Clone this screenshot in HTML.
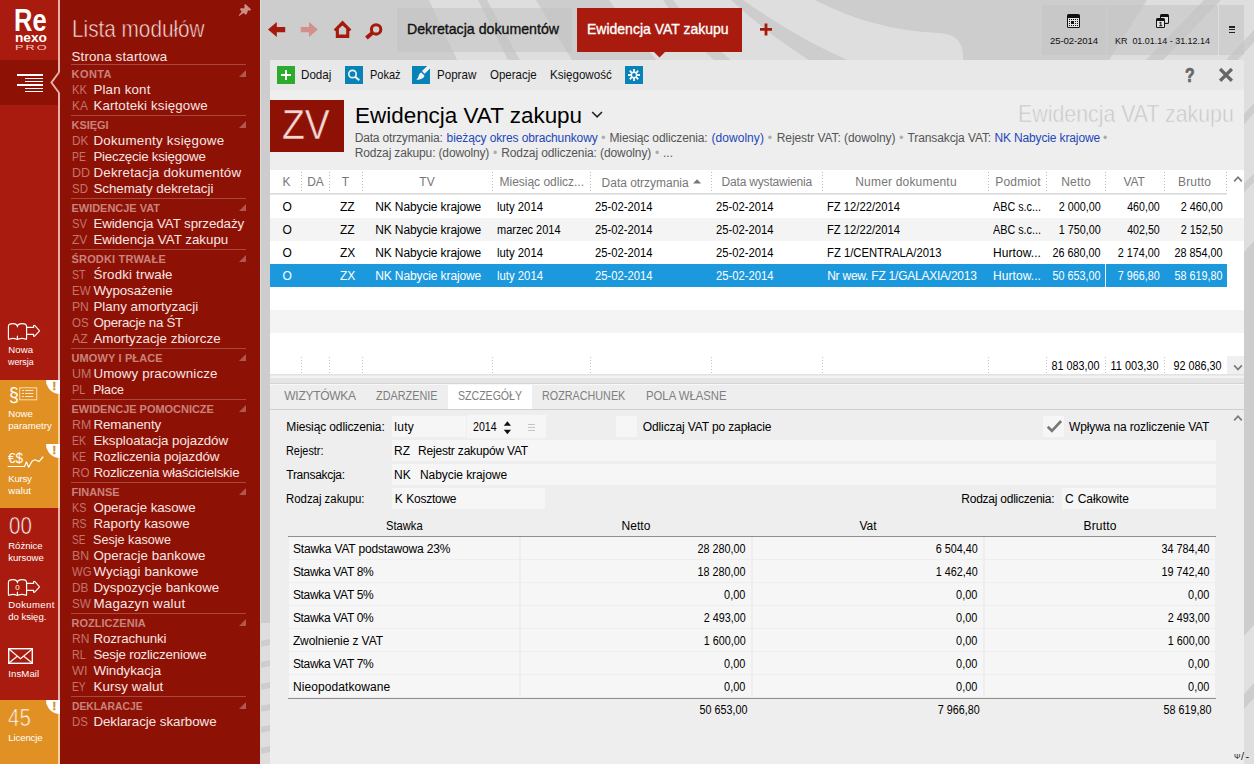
<!DOCTYPE html>
<html lang="pl"><head><meta charset="utf-8"><title>Ewidencja VAT zakupu</title>
<style>
html,body{margin:0;padding:0;background:#cdcdcd;}
body{width:1254px;height:764px;overflow:hidden;font-family:"Liberation Sans",sans-serif;}
#app{position:relative;width:1254px;height:764px;overflow:hidden;background:#cdcdcd;}
.t{position:absolute;white-space:pre;margin:0;padding:0;}
.r{position:absolute;}
svg{position:absolute;overflow:visible;}

</style></head>
<body>
<div id="app">
<svg style="left:0;top:0" width="1254" height="764" viewBox="0 0 1254 764">
<path d="M429 0H478L509 62H458Z" fill="#dedede"/>
<path d="M487 0H536L573 62H521Z" fill="#dedede"/>
<path d="M609 0H663Q683 32 716 62H658Q630 30 609 0Z" fill="#dedede"/>
<path d="M673 0H731Q765 32 812 62H733Q697 32 673 0Z" fill="#dedede"/>
<path d="M743 0H815Q872 30 938 33Q963 34 963 56V62H852Q800 40 743 0Z" fill="#dedede"/>
<path d="M1147 0H1254V103.6L1244 114V62H1108Z" fill="#dedede"/>
<path d="M1204 0H1221L1161 62H1144Z" fill="#cdcdcd"/>
<path d="M1254 30V42L1236 62H1224Z" fill="#cdcdcd"/>
<path d="M1254 113L1244 124.5V183L1254 173.8Z" fill="#dedede"/>
<path d="M1254 182L1244 192.6V252L1254 241Z" fill="#dedede"/>
<path d="M1244 636L1254 625V683L1244 694Z" fill="#e0e0e0"/>
<path d="M1244 709L1254 698V764H1244Z" fill="#dedede"/>
<rect x="260" y="623" width="10" height="141" fill="#dedede"/>
<path d="M260 641L270 639V645L260 647Z" fill="#cdcdcd"/>
<path d="M260 662L270 660V666L260 668Z" fill="#cdcdcd"/>
<path d="M260 684L270 682V688L260 690Z" fill="#cdcdcd"/>
<path d="M260 706L270 704V710L260 712Z" fill="#cdcdcd"/>
<path d="M260 727L270 725V731L260 733Z" fill="#cdcdcd"/>
<path d="M260 748L270 746V752L260 754Z" fill="#cdcdcd"/>
</svg>
<aside id="iconbar">
<div class="r" style="left:0px;top:0px;width:58px;height:764px;background:#a91b0e;"></div>
<div class="r" style="left:0px;top:60px;width:58px;height:45px;background:#8e1106;"></div>
<div class="r" style="left:58px;top:0px;width:2px;height:764px;background:#e6b0aa;"></div>
<div class="r" style="left:0px;top:380px;width:58px;height:64px;background:#e19124;"></div>
<div class="r" style="left:58px;top:380px;width:2px;height:64px;background:#f3d2a3;"></div>
<div class="r" style="left:0px;top:444px;width:58px;height:64px;background:#e19124;"></div>
<div class="r" style="left:58px;top:444px;width:2px;height:64px;background:#f3d2a3;"></div>
<div class="r" style="left:0px;top:700px;width:58px;height:64px;background:#e19124;"></div>
<div class="r" style="left:58px;top:700px;width:2px;height:64px;background:#f3d2a3;"></div>
<svg style="left:0;top:0" width="62" height="764" viewBox="0 0 62 764">
<rect x="17" y="74" width="26" height="2" fill="#fff"/>
<rect x="25" y="78" width="18" height="1" fill="#fff"/>
<rect x="25" y="81" width="18" height="1" fill="#fff"/>
<rect x="17" y="84" width="26" height="2" fill="#fff"/>
<rect x="25" y="88" width="18" height="1" fill="#fff"/>
<rect x="25" y="91" width="18" height="1" fill="#fff"/>
<rect x="57.5" y="72.6" width="3" height="19.8" fill="#8e1106"/>
<path d="M59 72.2L51.4 82.6L59 92.8" fill="none" stroke="#e6b0aa" stroke-width="1.9" stroke-linejoin="miter"/>
<path d="M8.4 338.4V326.4Q8.4 323.6 12.9 323.6Q17.4 323.6 17.4 326.8Q17.4 323.6 22 323.6Q26.6 323.6 26.6 326.4V338.4Q26.6 339.8 25.4 339.1Q22 337.5 18.6 339.1Q17.4 339.8 17.4 338.4V336M17.4 338.4Q17.4 339.8 16.2 339.1Q12.9 337.5 9.6 339.1Q8.4 339.8 8.4 338.4M26.6 327.3H33.6V325.6Q34.1 324.9 34.9 325.7L39.6 330.8L34.9 335.9Q34.1 336.7 33.6 336V334.4H26.6" fill="none" stroke="#fff" stroke-width="1.15" stroke-linejoin="round" stroke-linecap="round"/>
<path d="M8.4 594.4V582.4Q8.4 579.6 12.9 579.6Q17.4 579.6 17.4 582.8Q17.4 579.6 22 579.6Q26.6 579.6 26.6 582.4V594.4Q26.6 595.8 25.4 595.1Q22 593.5 18.6 595.1Q17.4 595.8 17.4 594.4V592M17.4 594.4Q17.4 595.8 16.2 595.1Q12.9 593.5 9.6 595.1Q8.4 595.8 8.4 594.4M26.6 583.3H33.6V581.6Q34.1 580.9 34.9 581.7L39.6 586.8L34.9 591.9Q34.1 592.7 33.6 592V590.4H26.6" fill="none" stroke="#fff" stroke-width="1.15" stroke-linejoin="round" stroke-linecap="round"/>
<rect x="19.7" y="387.8" width="17" height="12" fill="none" stroke="#f7dcb4" stroke-width="1"/>
<rect x="22" y="390.0" width="2" height="1" fill="#fbe9cf"/><rect x="25.1" y="390.0" width="8.1" height="1" fill="#fbe9cf"/>
<rect x="22" y="393.0" width="2" height="1" fill="#fbe9cf"/><rect x="25.1" y="393.0" width="8.1" height="1" fill="#fbe9cf"/>
<rect x="22" y="396.0" width="2" height="1" fill="#fbe9cf"/><rect x="25.1" y="396.0" width="8.1" height="1" fill="#fbe9cf"/>
<path d="M46 380H60V394A14 14 0 0 1 46 380Z" fill="#fff"/>
<path d="M46 444H60V458A14 14 0 0 1 46 444Z" fill="#fff"/>
<path d="M46 700H60V714A14 14 0 0 1 46 700Z" fill="#fff"/>
<path d="M8.2 466.5H24.5L26.4 461.9L28.7 467.2L31.9 461.5Q34.2 459.2 36.3 460.3T39.3 461.4L42.9 457" fill="none" stroke="#fff" stroke-width="1.2" stroke-linejoin="round" stroke-linecap="round"/>
<rect x="8.7" y="648.7" width="23.6" height="14.6" fill="none" stroke="#fff" stroke-width="1.4"/>
<path d="M9.2 649.2L20.5 658.7L31.9 649.2M9.2 662.8L17.3 656.2M31.9 662.8L23.8 656.2" fill="none" stroke="#fff" stroke-width="1.15"/>
</svg>
<div class="t" style="top:-0.48px;font-size:31.4px;line-height:41px;color:#fff;font-weight:700;left:14.30px;transform:scaleX(0.8121);transform-origin:left center;">Re</div>
<div class="t" style="top:28.93px;font-size:13.2px;line-height:17px;color:#fff;font-weight:700;left:14.60px;transform:scaleX(1.0396);transform-origin:left center;">nexo</div>
<div class="t" style="top:43.33px;font-size:7.7px;line-height:10px;color:#f3cdc9;left:14.60px;letter-spacing:1.2px;transform:scaleX(1.66);transform-origin:left center;">PRO</div>
<div class="t" style="top:343.67px;font-size:9.6px;line-height:12px;color:#fff;letter-spacing:0.142px;left:8.20px;">Nowa</div>
<div class="t" style="top:355.67px;font-size:9.6px;line-height:12px;color:#fff;left:8.20px;transform:scaleX(0.9230);transform-origin:left center;">wersja</div>
<div class="t" style="top:407.67px;font-size:9.6px;line-height:12px;color:#fff;letter-spacing:0.067px;left:8.20px;">Nowe</div>
<div class="t" style="top:419.67px;font-size:9.6px;line-height:12px;color:#fff;letter-spacing:0.068px;left:8.20px;">parametry</div>
<div class="t" style="top:472.67px;font-size:9.6px;line-height:12px;color:#fff;letter-spacing:-0.206px;left:8.20px;">Kursy</div>
<div class="t" style="top:484.67px;font-size:9.6px;line-height:12px;color:#fff;letter-spacing:0.099px;left:8.20px;">walut</div>
<div class="t" style="top:540.37px;font-size:9.6px;line-height:12px;color:#fff;letter-spacing:-0.025px;left:8.20px;">Różnice</div>
<div class="t" style="top:552.37px;font-size:9.6px;line-height:12px;color:#fff;letter-spacing:-0.019px;left:8.20px;">kursowe</div>
<div class="t" style="top:599.37px;font-size:9.6px;line-height:12px;color:#fff;letter-spacing:0.358px;left:8.20px;">Dokument</div>
<div class="t" style="top:611.37px;font-size:9.6px;line-height:12px;color:#fff;letter-spacing:-0.023px;left:8.20px;">do księg.</div>
<div class="t" style="top:668.27px;font-size:9.6px;line-height:12px;color:#fff;letter-spacing:0.101px;left:8.20px;">InsMail</div>
<div class="t" style="top:732.17px;font-size:9.6px;line-height:12px;color:#fff;letter-spacing:-0.100px;left:8.20px;">Licencje</div>
<div class="t" style="top:510.24px;font-size:24.7px;line-height:32px;color:#fff;left:9.00px;transform:scaleX(0.8300);transform-origin:left center;-webkit-text-stroke:.7px #a91b0e;">00</div>
<div class="t" style="top:702.24px;font-size:24.7px;line-height:32px;color:#fff;left:8.40px;transform:scaleX(0.8300);transform-origin:left center;-webkit-text-stroke:.7px #e19124;">45</div>
<div class="t" style="top:379.39px;font-size:11px;line-height:14px;color:#de8a1c;font-weight:700;left:52.50px;-webkit-text-stroke:.5px #de8a1c;">!</div>
<div class="t" style="top:443.39px;font-size:11px;line-height:14px;color:#de8a1c;font-weight:700;left:52.50px;-webkit-text-stroke:.5px #de8a1c;">!</div>
<div class="t" style="top:699.39px;font-size:11px;line-height:14px;color:#de8a1c;font-weight:700;left:52.50px;-webkit-text-stroke:.5px #de8a1c;">!</div>
<div class="t" style="top:582.83px;font-size:8px;line-height:10px;color:#fff;left:15.20px;">0</div>
<div class="t" style="top:382.58px;font-size:19.4px;line-height:25px;color:#fff;left:8.60px;transform:scaleX(0.9077);transform-origin:left center;">§</div>
<div class="t" style="top:447.80px;font-size:15px;line-height:20px;color:#fff;left:8.20px;transform:scaleX(0.9049);transform-origin:left center;">€$</div>
</aside>
<nav id="modules">
<div class="r" style="left:60px;top:0px;width:200px;height:764px;background:#8e1106;"></div>
<div class="t" style="top:13.38px;font-size:24px;line-height:31px;color:#f8e4e1;left:71.70px;transform:scaleX(0.8643);transform-origin:left center;-webkit-text-stroke:.6px #8e1106;">Lista modułów</div>
<div class="t" style="top:47.88px;font-size:13.33px;line-height:17px;color:#f7e6e3;letter-spacing:0.164px;left:71.50px;">Strona startowa</div>
<div class="r" style="left:71px;top:64px;width:175px;height:1px;background:#a9483f;"></div>
<div class="t" style="top:66.89px;font-size:11px;line-height:14px;color:#c9837b;font-weight:700;letter-spacing:0.441px;left:71.50px;">KONTA</div>
<svg style="left:239px;top:70px" width="7" height="7"><path d="M7 0V7H0Z" fill="#b0574e"/></svg>
<div class="t" style="top:81.08px;font-size:13.33px;line-height:17px;color:#c4746b;left:71.50px;transform:scaleX(0.8443);transform-origin:left center;">KK</div>
<div class="t" style="top:81.08px;font-size:13.33px;line-height:17px;color:#f7e6e3;letter-spacing:0.180px;left:93.40px;">Plan kont</div>
<div class="t" style="top:97.08px;font-size:13.33px;line-height:17px;color:#c4746b;left:71.50px;transform:scaleX(0.8912);transform-origin:left center;">KA</div>
<div class="t" style="top:97.08px;font-size:13.33px;line-height:17px;color:#f7e6e3;letter-spacing:0.135px;left:93.40px;">Kartoteki księgowe</div>
<div class="r" style="left:71px;top:115px;width:175px;height:1px;background:#a9483f;"></div>
<div class="t" style="top:117.89px;font-size:11px;line-height:14px;color:#c9837b;font-weight:700;letter-spacing:-0.033px;left:71.50px;">KSIĘGI</div>
<svg style="left:239px;top:121px" width="7" height="7"><path d="M7 0V7H0Z" fill="#b0574e"/></svg>
<div class="t" style="top:132.08px;font-size:13.33px;line-height:17px;color:#c4746b;left:71.50px;transform:scaleX(0.8954);transform-origin:left center;">DK</div>
<div class="t" style="top:132.08px;font-size:13.33px;line-height:17px;color:#f7e6e3;letter-spacing:0.234px;left:93.40px;">Dokumenty księgowe</div>
<div class="t" style="top:148.08px;font-size:13.33px;line-height:17px;color:#c4746b;left:71.50px;transform:scaleX(0.7751);transform-origin:left center;">PE</div>
<div class="t" style="top:148.08px;font-size:13.33px;line-height:17px;color:#f7e6e3;letter-spacing:-0.228px;left:93.40px;">Pieczęcie księgowe</div>
<div class="t" style="top:164.08px;font-size:13.33px;line-height:17px;color:#c4746b;left:71.50px;transform:scaleX(0.9418);transform-origin:left center;">DD</div>
<div class="t" style="top:164.08px;font-size:13.33px;line-height:17px;color:#f7e6e3;letter-spacing:0.239px;left:93.40px;">Dekretacja dokumentów</div>
<div class="t" style="top:180.08px;font-size:13.33px;line-height:17px;color:#c4746b;left:71.50px;transform:scaleX(0.8606);transform-origin:left center;">SD</div>
<div class="t" style="top:180.08px;font-size:13.33px;line-height:17px;color:#f7e6e3;left:93.40px;">Schematy dekretacji</div>
<div class="r" style="left:71px;top:198px;width:175px;height:1px;background:#a9483f;"></div>
<div class="t" style="top:200.89px;font-size:11px;line-height:14px;color:#c9837b;font-weight:700;letter-spacing:-0.025px;left:71.50px;">EWIDENCJE VAT</div>
<svg style="left:239px;top:204px" width="7" height="7"><path d="M7 0V7H0Z" fill="#b0574e"/></svg>
<div class="t" style="top:215.08px;font-size:13.33px;line-height:17px;color:#c4746b;left:71.50px;transform:scaleX(0.8387);transform-origin:left center;">SV</div>
<div class="t" style="top:215.08px;font-size:13.33px;line-height:17px;color:#f7e6e3;letter-spacing:-0.083px;left:93.40px;">Ewidencja VAT sprzedaży</div>
<div class="t" style="top:231.08px;font-size:13.33px;line-height:17px;color:#c4746b;left:71.50px;transform:scaleX(0.9053);transform-origin:left center;">ZV</div>
<div class="t" style="top:231.08px;font-size:13.33px;line-height:17px;color:#f7e6e3;left:93.40px;">Ewidencja VAT zakupu</div>
<div class="r" style="left:71px;top:249px;width:175px;height:1px;background:#a9483f;"></div>
<div class="t" style="top:251.89px;font-size:11px;line-height:14px;color:#c9837b;font-weight:700;letter-spacing:0.179px;left:71.50px;">ŚRODKI TRWAŁE</div>
<svg style="left:239px;top:255px" width="7" height="7"><path d="M7 0V7H0Z" fill="#b0574e"/></svg>
<div class="t" style="top:266.08px;font-size:13.33px;line-height:17px;color:#c4746b;left:71.50px;transform:scaleX(0.8007);transform-origin:left center;">ST</div>
<div class="t" style="top:266.08px;font-size:13.33px;line-height:17px;color:#f7e6e3;letter-spacing:0.166px;left:93.40px;">Środki trwałe</div>
<div class="t" style="top:282.08px;font-size:13.33px;line-height:17px;color:#c4746b;left:71.50px;transform:scaleX(0.8672);transform-origin:left center;">EW</div>
<div class="t" style="top:282.08px;font-size:13.33px;line-height:17px;color:#f7e6e3;letter-spacing:-0.064px;left:93.40px;">Wyposażenie</div>
<div class="t" style="top:298.08px;font-size:13.33px;line-height:17px;color:#c4746b;left:71.50px;transform:scaleX(0.9135);transform-origin:left center;">PN</div>
<div class="t" style="top:298.08px;font-size:13.33px;line-height:17px;color:#f7e6e3;letter-spacing:0.026px;left:93.40px;">Plany amortyzacji</div>
<div class="t" style="top:314.08px;font-size:13.33px;line-height:17px;color:#c4746b;left:71.50px;transform:scaleX(0.8622);transform-origin:left center;">OS</div>
<div class="t" style="top:314.08px;font-size:13.33px;line-height:17px;color:#f7e6e3;letter-spacing:-0.267px;left:93.40px;">Operacje na ŚT</div>
<div class="t" style="top:330.08px;font-size:13.33px;line-height:17px;color:#c4746b;left:71.50px;transform:scaleX(0.9223);transform-origin:left center;">AZ</div>
<div class="t" style="top:330.08px;font-size:13.33px;line-height:17px;color:#f7e6e3;letter-spacing:0.026px;left:93.40px;">Amortyzacje zbiorcze</div>
<div class="r" style="left:71px;top:348px;width:175px;height:1px;background:#a9483f;"></div>
<div class="t" style="top:350.89px;font-size:11px;line-height:14px;color:#c9837b;font-weight:700;letter-spacing:0.128px;left:71.50px;">UMOWY I PŁACE</div>
<svg style="left:239px;top:354px" width="7" height="7"><path d="M7 0V7H0Z" fill="#b0574e"/></svg>
<div class="t" style="top:365.08px;font-size:13.33px;line-height:17px;color:#c4746b;left:71.50px;transform:scaleX(0.9356);transform-origin:left center;">UM</div>
<div class="t" style="top:365.08px;font-size:13.33px;line-height:17px;color:#f7e6e3;letter-spacing:0.111px;left:93.40px;">Umowy pracownicze</div>
<div class="t" style="top:381.08px;font-size:13.33px;line-height:17px;color:#c4746b;left:71.50px;transform:scaleX(0.8170);transform-origin:left center;">PL</div>
<div class="t" style="top:381.08px;font-size:13.33px;line-height:17px;color:#f7e6e3;left:93.40px;transform:scaleX(0.9297);transform-origin:left center;">Płace</div>
<div class="r" style="left:71px;top:399px;width:175px;height:1px;background:#a9483f;"></div>
<div class="t" style="top:401.89px;font-size:11px;line-height:14px;color:#c9837b;font-weight:700;letter-spacing:-0.036px;left:71.50px;">EWIDENCJE POMOCNICZE</div>
<svg style="left:239px;top:405px" width="7" height="7"><path d="M7 0V7H0Z" fill="#b0574e"/></svg>
<div class="t" style="top:416.08px;font-size:13.33px;line-height:17px;color:#c4746b;left:71.50px;transform:scaleX(0.9333);transform-origin:left center;">RM</div>
<div class="t" style="top:416.08px;font-size:13.33px;line-height:17px;color:#f7e6e3;letter-spacing:-0.041px;left:93.40px;">Remanenty</div>
<div class="t" style="top:432.08px;font-size:13.33px;line-height:17px;color:#c4746b;left:71.50px;transform:scaleX(0.7900);transform-origin:left center;">EK</div>
<div class="t" style="top:432.08px;font-size:13.33px;line-height:17px;color:#f7e6e3;letter-spacing:-0.043px;left:93.40px;">Eksploatacja pojazdów</div>
<div class="t" style="top:448.08px;font-size:13.33px;line-height:17px;color:#c4746b;left:71.50px;transform:scaleX(0.7900);transform-origin:left center;">KE</div>
<div class="t" style="top:448.08px;font-size:13.33px;line-height:17px;color:#f7e6e3;letter-spacing:-0.114px;left:93.40px;">Rozliczenia pojazdów</div>
<div class="t" style="top:464.08px;font-size:13.33px;line-height:17px;color:#c4746b;left:71.50px;transform:scaleX(0.8744);transform-origin:left center;">RO</div>
<div class="t" style="top:464.08px;font-size:13.33px;line-height:17px;color:#f7e6e3;letter-spacing:-0.221px;left:93.40px;">Rozliczenia właścicielskie</div>
<div class="r" style="left:71px;top:482px;width:175px;height:1px;background:#a9483f;"></div>
<div class="t" style="top:484.89px;font-size:11px;line-height:14px;color:#c9837b;font-weight:700;letter-spacing:-0.012px;left:71.50px;">FINANSE</div>
<svg style="left:239px;top:488px" width="7" height="7"><path d="M7 0V7H0Z" fill="#b0574e"/></svg>
<div class="t" style="top:499.08px;font-size:13.33px;line-height:17px;color:#c4746b;left:71.50px;transform:scaleX(0.8081);transform-origin:left center;">KS</div>
<div class="t" style="top:499.08px;font-size:13.33px;line-height:17px;color:#f7e6e3;letter-spacing:-0.059px;left:93.40px;">Operacje kasowe</div>
<div class="t" style="top:515.08px;font-size:13.33px;line-height:17px;color:#c4746b;left:71.50px;transform:scaleX(0.7887);transform-origin:left center;">RS</div>
<div class="t" style="top:515.08px;font-size:13.33px;line-height:17px;color:#f7e6e3;letter-spacing:0.046px;left:93.40px;">Raporty kasowe</div>
<div class="t" style="top:531.08px;font-size:13.33px;line-height:17px;color:#c4746b;left:71.50px;transform:scaleX(0.7538);transform-origin:left center;">SE</div>
<div class="t" style="top:531.08px;font-size:13.33px;line-height:17px;color:#f7e6e3;left:93.40px;transform:scaleX(0.9473);transform-origin:left center;">Sesje kasowe</div>
<div class="t" style="top:547.08px;font-size:13.33px;line-height:17px;color:#c4746b;left:71.50px;transform:scaleX(0.9227);transform-origin:left center;">BN</div>
<div class="t" style="top:547.08px;font-size:13.33px;line-height:17px;color:#f7e6e3;letter-spacing:0.066px;left:93.40px;">Operacje bankowe</div>
<div class="t" style="top:563.08px;font-size:13.33px;line-height:17px;color:#c4746b;left:71.50px;transform:scaleX(0.8452);transform-origin:left center;">WG</div>
<div class="t" style="top:563.08px;font-size:13.33px;line-height:17px;color:#f7e6e3;letter-spacing:0.107px;left:93.40px;">Wyciągi bankowe</div>
<div class="t" style="top:579.08px;font-size:13.33px;line-height:17px;color:#c4746b;left:71.50px;transform:scaleX(0.8903);transform-origin:left center;">DB</div>
<div class="t" style="top:579.08px;font-size:13.33px;line-height:17px;color:#f7e6e3;letter-spacing:0.039px;left:93.40px;">Dyspozycje bankowe</div>
<div class="t" style="top:595.08px;font-size:13.33px;line-height:17px;color:#c4746b;left:71.50px;transform:scaleX(0.8822);transform-origin:left center;">SW</div>
<div class="t" style="top:595.08px;font-size:13.33px;line-height:17px;color:#f7e6e3;letter-spacing:0.238px;left:93.40px;">Magazyn walut</div>
<div class="r" style="left:71px;top:613px;width:175px;height:1px;background:#a9483f;"></div>
<div class="t" style="top:615.89px;font-size:11px;line-height:14px;color:#c9837b;font-weight:700;letter-spacing:0.022px;left:71.50px;">ROZLICZENIA</div>
<svg style="left:239px;top:619px" width="7" height="7"><path d="M7 0V7H0Z" fill="#b0574e"/></svg>
<div class="t" style="top:630.08px;font-size:13.33px;line-height:17px;color:#c4746b;left:71.50px;transform:scaleX(0.9038);transform-origin:left center;">RN</div>
<div class="t" style="top:630.08px;font-size:13.33px;line-height:17px;color:#f7e6e3;letter-spacing:-0.090px;left:93.40px;">Rozrachunki</div>
<div class="t" style="top:646.08px;font-size:13.33px;line-height:17px;color:#c4746b;left:71.50px;transform:scaleX(0.8111);transform-origin:left center;">RL</div>
<div class="t" style="top:646.08px;font-size:13.33px;line-height:17px;color:#f7e6e3;letter-spacing:-0.208px;left:93.40px;">Sesje rozliczeniowe</div>
<div class="t" style="top:662.08px;font-size:13.33px;line-height:17px;color:#c4746b;left:71.50px;transform:scaleX(0.9530);transform-origin:left center;">WI</div>
<div class="t" style="top:662.08px;font-size:13.33px;line-height:17px;color:#f7e6e3;letter-spacing:-0.036px;left:93.40px;">Windykacja</div>
<div class="t" style="top:678.08px;font-size:13.33px;line-height:17px;color:#c4746b;left:71.50px;transform:scaleX(0.7698);transform-origin:left center;">EY</div>
<div class="t" style="top:678.08px;font-size:13.33px;line-height:17px;color:#f7e6e3;letter-spacing:0.101px;left:93.40px;">Kursy walut</div>
<div class="r" style="left:71px;top:696px;width:175px;height:1px;background:#a9483f;"></div>
<div class="t" style="top:698.89px;font-size:11px;line-height:14px;color:#c9837b;font-weight:700;left:71.50px;transform:scaleX(0.9390);transform-origin:left center;">DEKLARACJE</div>
<svg style="left:239px;top:702px" width="7" height="7"><path d="M7 0V7H0Z" fill="#b0574e"/></svg>
<div class="t" style="top:713.08px;font-size:13.33px;line-height:17px;color:#c4746b;left:71.50px;transform:scaleX(0.8606);transform-origin:left center;">DS</div>
<div class="t" style="top:713.08px;font-size:13.33px;line-height:17px;color:#f7e6e3;letter-spacing:-0.027px;left:93.40px;">Deklaracje skarbowe</div>
<svg style="left:0;top:0" width="262" height="20" viewBox="0 0 262 20"><path d="M245.4 4L251.2 9.4L249.7 10.7L248 10.2L247 13.4L245.7 14.8L243.5 13.1L239.2 16L238.7 15.3L241.7 11.8L240 9.4L241 8.1L243.8 8.5L244.8 6.4L244.1 5.3Z" fill="#cf8d86"/></svg>
<div class="r" style="left:260px;top:0px;width:1px;height:764px;background:#d9dddd;"></div>
</nav>
<header id="topbar">
<svg style="left:0;top:0" width="1254" height="60" viewBox="0 0 1254 60">
<path d="M268 29.5L276.8 22V27H285.2V32.2H276.8V37Z" fill="#a61a0e"/>
<path d="M317.8 29.5L309 22V27H300.8V32.2H309V37Z" fill="#d3908a"/>
<path d="M342.5 20.6L351.4 29.6L349.6 31.2L349.3 30.9V38H335.8V30.9L335.4 31.2L333.7 29.6ZM342.5 25.4L338.9 28.8V34.6H346.2V28.8Z" fill="#a61a0e" fill-rule="evenodd"/>
<circle cx="376.1" cy="29.4" r="4.7" fill="none" stroke="#a61a0e" stroke-width="3.1"/>
<path d="M372.8 32.6L366.4 38.1" stroke="#a61a0e" stroke-width="4" fill="none"/>
<path d="M760 28H764.6V23.4H767.4V28H772V30.8H767.4V35.4H764.6V30.8H760Z" fill="#a61a0e"/>
</svg>
<div class="r" style="left:397px;top:8px;width:175px;height:44px;background:rgba(194,194,194,0.55);"></div>
<div class="r" style="left:577px;top:8px;width:165px;height:44px;background:#a91b0e;"></div>
<svg style="left:654px;top:52px" width="12" height="6"><path d="M0 0H11L5.5 5.5Z" fill="#a91b0e"/></svg>
<div class="t" style="top:19.10px;font-size:15px;line-height:20px;color:#111;left:407.00px;transform:scaleX(0.9446);transform-origin:left center;-webkit-text-stroke:.35px #111;">Dekretacja dokumentów</div>
<div class="t" style="top:19.10px;font-size:15px;line-height:20px;color:#fff;left:587.00px;transform:scaleX(0.9330);transform-origin:left center;-webkit-text-stroke:.35px #fff;">Ewidencja VAT zakupu</div>
<div class="r" style="left:1042px;top:5px;width:64px;height:50px;background:rgba(196,196,196,0.6);"></div>
<div class="r" style="left:1107px;top:5px;width:111px;height:50px;background:rgba(196,196,196,0.6);"></div>
<div class="r" style="left:1219px;top:5px;width:25px;height:50px;background:rgba(196,196,196,0.6);"></div>
<div class="t" style="top:34.57px;font-size:9.6px;line-height:12px;color:#111;letter-spacing:-0.108px;left:1050.00px;">25-02-2014</div>
<div class="t" style="top:34.57px;font-size:9.6px;line-height:12px;color:#111;left:1115.00px;transform:scaleX(0.9325);transform-origin:left center;">KR  01.01.14 - 31.12.14</div>
<svg style="left:1060px;top:10px" width="110" height="24" viewBox="1060 10 110 24">
<rect x="1067" y="14" width="13" height="14" rx="1.6" fill="#111"/>
<rect x="1068" y="18" width="11" height="9" fill="#e4e4e4"/>
<g fill="#111"><rect x="1069" y="19" width="1" height="1"/><rect x="1071" y="19" width="1" height="1"/><rect x="1073" y="19" width="1" height="1"/><rect x="1075" y="19" width="1" height="1"/><rect x="1077" y="19" width="1" height="1"/><rect x="1069" y="21" width="1" height="1"/><rect x="1075" y="21" width="1" height="1"/><rect x="1077" y="21" width="1" height="1"/><rect x="1069" y="23" width="1" height="1"/><rect x="1075" y="23" width="1" height="1"/><rect x="1077" y="23" width="1" height="1"/><rect x="1069" y="25" width="1" height="1"/><rect x="1071" y="25" width="1" height="1"/><rect x="1073" y="25" width="1" height="1"/><rect x="1075" y="25" width="1" height="1"/><rect x="1077" y="25" width="1" height="1"/><rect x="1071" y="21" width="3" height="3"/></g>
<rect x="1160" y="14" width="9" height="10" rx="1.5" fill="#111"/><rect x="1161" y="17" width="7" height="5.8" fill="#e2e2e2"/>
<rect x="1156" y="18" width="9" height="10" rx="1.5" fill="#111"/><rect x="1157" y="21" width="7" height="6" fill="#e6e6e6"/>
</svg>
<div class="t" style="top:20.76px;font-size:5.6px;line-height:7px;color:#111;font-weight:700;left:1158.90px;-webkit-text-stroke:.3px #111;">1</div>
<div class="r" style="left:1228.6px;top:26.3px;width:6.4px;height:1.3px;background:#222;"></div>
<div class="r" style="left:1228.6px;top:29px;width:6.4px;height:1.3px;background:#222;"></div>
<div class="r" style="left:1228.6px;top:31.7px;width:6.4px;height:1.3px;background:#222;"></div>
</header>
<main id="content">
<div class="r" style="left:270px;top:60px;width:974px;height:704px;background:#eeeeee;"></div>
<div class="r" style="left:270px;top:60px;width:974px;height:30px;background:#e8e8e8;"></div>
<div class="r" style="left:277px;top:66px;width:18px;height:18px;background:#2dab2d;"></div>
<div class="r" style="left:345px;top:66px;width:18px;height:18px;background:#0783b8;"></div>
<div class="r" style="left:412px;top:66px;width:18px;height:18px;background:#0783b8;"></div>
<div class="r" style="left:625px;top:66px;width:18px;height:18px;background:#0783b8;"></div>
<svg style="left:270px;top:60px" width="974" height="30" viewBox="270 60 974 30">
<path d="M281 73.9H285V70H287V73.9H291V76H287V80H285V76H281Z" fill="#fff"/>
<circle cx="352.5" cy="74" r="3.7" fill="none" stroke="#f0f0f0" stroke-width="1.7"/><path d="M355.3 76.9L359.3 80.3" stroke="#f0f0f0" stroke-width="2.1" fill="none"/>
<path d="M427.2 66H430V68.6L424.6 73.8L422 71Z" fill="#f2f2f2"/>
<path d="M421.6 72.8L424.4 75.6Q424.2 78.4 420.4 79.2Q418.2 79.7 416.4 79.7Q418.4 77.8 418.7 75.8Q419.2 72.8 422 72.4Z" fill="#f2f2f2"/>
<g stroke="#f4f4f4" fill="none"><circle cx="634" cy="75" r="2.7" stroke-width="1.5"/><path d="M637.00 75.00L640.00 75.00M636.12 77.12L638.24 79.24M634.00 78.00L634.00 81.00M631.88 77.12L629.76 79.24M631.00 75.00L628.00 75.00M631.88 72.88L629.76 70.76M634.00 72.00L634.00 69.00M636.12 72.88L638.24 70.76" stroke-width="1.9"/></g>
<path d="M1219.2 70.2L1221.3 68.1L1226 72.8L1230.7 68.1L1232.8 70.2L1228.1 74.9L1232.8 79.6L1230.7 81.7L1226 77L1221.3 81.7L1219.2 79.6L1223.9 74.9Z" fill="#666" stroke="#666" stroke-width=".5"/>
</svg>
<div class="t" style="top:66.10px;font-size:13px;line-height:17px;color:#111;left:301.40px;transform:scaleX(0.8949);transform-origin:left center;">Dodaj</div>
<div class="t" style="top:66.10px;font-size:13px;line-height:17px;color:#111;left:369.50px;transform:scaleX(0.8439);transform-origin:left center;">Pokaż</div>
<div class="t" style="top:66.10px;font-size:13px;line-height:17px;color:#111;left:436.70px;transform:scaleX(0.8916);transform-origin:left center;">Popraw</div>
<div class="t" style="top:66.10px;font-size:13px;line-height:17px;color:#111;left:489.60px;transform:scaleX(0.8834);transform-origin:left center;">Operacje</div>
<div class="t" style="top:66.10px;font-size:13px;line-height:17px;color:#111;left:550.30px;transform:scaleX(0.8894);transform-origin:left center;">Księgowość</div>
<div class="t" style="top:61.97px;font-size:20px;line-height:26px;color:#666;font-weight:700;left:1185.30px;transform:scaleX(0.7857);transform-origin:left center;-webkit-text-stroke:.7px #666;">?</div>
<div class="r" style="left:270px;top:100px;width:74px;height:52px;background:#8e1106;"></div>
<div class="t" style="top:96.64px;font-size:42.3px;line-height:55px;color:#f4d6d2;left:281.50px;transform:scaleX(0.8842);transform-origin:left center;-webkit-text-stroke:.45px #8e1106;">ZV</div>
<div class="t" style="top:99.90px;font-size:22.8px;line-height:30px;color:#000;left:355.20px;transform:scaleX(0.9846);transform-origin:left center;">Ewidencja VAT zakupu</div>
<svg style="left:591px;top:110px" width="12" height="9"><path d="M1.2 2L6.1 6.8L11 2" fill="none" stroke="#222" stroke-width="1.6"/></svg>
<div class="t" style="top:97.98px;font-size:24.3px;line-height:32px;color:#c6c6c6;right:20.30px;transform:scaleX(0.8775);transform-origin:right center;-webkit-text-stroke:.6px #eeeeee;">Ewidencja VAT zakupu</div>
<div class="t" style="top:129.74px;font-size:12px;line-height:16px;color:#555;letter-spacing:-0.169px;left:354.70px;">Data otrzymania:</div>
<div class="t" style="top:129.74px;font-size:12px;line-height:16px;color:#2446b8;letter-spacing:-0.118px;left:446.60px;">bieżący okres obrachunkowy</div>
<div class="t" style="top:129.74px;font-size:12px;line-height:16px;color:#aaa;left:601.30px;">•</div>
<div class="t" style="top:129.74px;font-size:12px;line-height:16px;color:#555;letter-spacing:-0.143px;left:609.50px;">Miesiąc odliczenia:</div>
<div class="t" style="top:129.74px;font-size:12px;line-height:16px;color:#2446b8;letter-spacing:0.063px;left:711.40px;">(dowolny)</div>
<div class="t" style="top:129.74px;font-size:12px;line-height:16px;color:#aaa;left:767.80px;">•</div>
<div class="t" style="top:129.74px;font-size:12px;line-height:16px;color:#555;letter-spacing:-0.067px;left:776.70px;">Rejestr VAT: (dowolny)</div>
<div class="t" style="top:129.74px;font-size:12px;line-height:16px;color:#aaa;left:899.30px;">•</div>
<div class="t" style="top:129.74px;font-size:12px;line-height:16px;color:#555;letter-spacing:-0.109px;left:907.50px;">Transakcja VAT:</div>
<div class="t" style="top:129.74px;font-size:12px;line-height:16px;color:#2446b8;letter-spacing:-0.136px;left:994.40px;">NK Nabycie krajowe</div>
<div class="t" style="top:129.74px;font-size:12px;line-height:16px;color:#aaa;left:1103.00px;">•</div>
<div class="t" style="top:144.54px;font-size:12px;line-height:16px;color:#555;letter-spacing:-0.149px;left:354.70px;">Rodzaj zakupu: (dowolny)</div>
<div class="t" style="top:144.54px;font-size:12px;line-height:16px;color:#aaa;left:493.00px;">•</div>
<div class="t" style="top:144.54px;font-size:12px;line-height:16px;color:#555;letter-spacing:-0.098px;left:501.20px;">Rodzaj odliczenia: (dowolny)</div>
<div class="t" style="top:144.54px;font-size:12px;line-height:16px;color:#aaa;left:655.00px;">•</div>
<div class="t" style="top:144.54px;font-size:12px;line-height:16px;color:#555;left:663.00px;">...</div>
<div class="r" style="left:270px;top:170px;width:974px;height:205px;background:#fff;"></div>
<div class="r" style="left:270px;top:218px;width:974px;height:23px;background:#f4f4f4;"></div>
<div class="r" style="left:270px;top:310px;width:974px;height:23px;background:#f4f4f4;"></div>
<div class="r" style="left:270px;top:264px;width:957px;height:23px;background:#1c99dd;"></div>
<div class="r" style="left:270px;top:193px;width:957px;height:1px;background:#d9d9d9;"></div>
<div class="r" style="left:270px;top:194px;width:957px;height:1px;background:#e9e9e9;"></div>
<div class="r" style="left:1227px;top:356px;width:17px;height:19px;background:#f0f0f0;"></div>
<div class="r" style="left:270px;top:374px;width:974px;height:1px;background:#e2e2e2;"></div>
<div class="r" style="left:270px;top:375px;width:974px;height:1px;background:#e9e9e9;"></div>
<div class="r" style="left:270px;top:376px;width:974px;height:2px;background:#f3f3f3;"></div>
<div class="r" style="left:270px;top:378px;width:974px;height:5px;background:#e5e5e5;"></div>
<div class="r" style="left:270px;top:383px;width:974px;height:1px;background:#d4d4d4;"></div>
<div class="r" style="left:270px;top:384px;width:974px;height:1px;background:#f8f8f8;"></div>
<div class="r" style="left:301px;top:172px;width:1px;height:20px;background:repeating-linear-gradient(to bottom,#bcbcbc 0 1px,transparent 1px 3px)"></div>
<div class="r" style="left:301px;top:357px;width:1px;height:17px;background:repeating-linear-gradient(to bottom,#c4c4c4 0 1px,transparent 1px 3px)"></div>
<div class="r" style="left:329px;top:172px;width:1px;height:20px;background:repeating-linear-gradient(to bottom,#bcbcbc 0 1px,transparent 1px 3px)"></div>
<div class="r" style="left:329px;top:357px;width:1px;height:17px;background:repeating-linear-gradient(to bottom,#c4c4c4 0 1px,transparent 1px 3px)"></div>
<div class="r" style="left:362px;top:172px;width:1px;height:20px;background:repeating-linear-gradient(to bottom,#bcbcbc 0 1px,transparent 1px 3px)"></div>
<div class="r" style="left:362px;top:357px;width:1px;height:17px;background:repeating-linear-gradient(to bottom,#c4c4c4 0 1px,transparent 1px 3px)"></div>
<div class="r" style="left:492px;top:172px;width:1px;height:20px;background:repeating-linear-gradient(to bottom,#bcbcbc 0 1px,transparent 1px 3px)"></div>
<div class="r" style="left:492px;top:357px;width:1px;height:17px;background:repeating-linear-gradient(to bottom,#c4c4c4 0 1px,transparent 1px 3px)"></div>
<div class="r" style="left:590px;top:172px;width:1px;height:20px;background:repeating-linear-gradient(to bottom,#bcbcbc 0 1px,transparent 1px 3px)"></div>
<div class="r" style="left:590px;top:357px;width:1px;height:17px;background:repeating-linear-gradient(to bottom,#c4c4c4 0 1px,transparent 1px 3px)"></div>
<div class="r" style="left:711px;top:172px;width:1px;height:20px;background:repeating-linear-gradient(to bottom,#bcbcbc 0 1px,transparent 1px 3px)"></div>
<div class="r" style="left:711px;top:357px;width:1px;height:17px;background:repeating-linear-gradient(to bottom,#c4c4c4 0 1px,transparent 1px 3px)"></div>
<div class="r" style="left:822px;top:172px;width:1px;height:20px;background:repeating-linear-gradient(to bottom,#bcbcbc 0 1px,transparent 1px 3px)"></div>
<div class="r" style="left:822px;top:357px;width:1px;height:17px;background:repeating-linear-gradient(to bottom,#c4c4c4 0 1px,transparent 1px 3px)"></div>
<div class="r" style="left:988px;top:172px;width:1px;height:20px;background:repeating-linear-gradient(to bottom,#bcbcbc 0 1px,transparent 1px 3px)"></div>
<div class="r" style="left:988px;top:357px;width:1px;height:17px;background:repeating-linear-gradient(to bottom,#c4c4c4 0 1px,transparent 1px 3px)"></div>
<div class="r" style="left:1046px;top:172px;width:1px;height:20px;background:repeating-linear-gradient(to bottom,#bcbcbc 0 1px,transparent 1px 3px)"></div>
<div class="r" style="left:1046px;top:357px;width:1px;height:17px;background:repeating-linear-gradient(to bottom,#c4c4c4 0 1px,transparent 1px 3px)"></div>
<div class="r" style="left:1105px;top:172px;width:1px;height:20px;background:repeating-linear-gradient(to bottom,#bcbcbc 0 1px,transparent 1px 3px)"></div>
<div class="r" style="left:1105px;top:357px;width:1px;height:17px;background:repeating-linear-gradient(to bottom,#c4c4c4 0 1px,transparent 1px 3px)"></div>
<div class="r" style="left:1164px;top:172px;width:1px;height:20px;background:repeating-linear-gradient(to bottom,#bcbcbc 0 1px,transparent 1px 3px)"></div>
<div class="r" style="left:1164px;top:357px;width:1px;height:17px;background:repeating-linear-gradient(to bottom,#c4c4c4 0 1px,transparent 1px 3px)"></div>
<div class="r" style="left:1226px;top:172px;width:1px;height:20px;background:repeating-linear-gradient(to bottom,#bcbcbc 0 1px,transparent 1px 3px)"></div>
<div class="r" style="left:1105px;top:264px;width:1px;height:23px;background:#e8f4fb;"></div>
<div class="t" style="top:173.54px;font-size:12px;line-height:16px;color:#777;left:282.50px;">K</div>
<div class="t" style="top:173.54px;font-size:12px;line-height:16px;color:#777;left:307.20px;">DA</div>
<div class="t" style="top:173.54px;font-size:12px;line-height:16px;color:#777;left:341.70px;">T</div>
<div class="t" style="top:173.54px;font-size:12px;line-height:16px;color:#777;left:419.33px;">TV</div>
<div class="t" style="top:173.54px;font-size:12px;line-height:16px;color:#777;letter-spacing:-0.012px;left:499.50px;">Miesiąc odlicz...</div>
<div class="t" style="top:174.74px;font-size:12px;line-height:16px;color:#777;letter-spacing:-0.025px;left:601.60px;">Data otrzymania</div>
<div class="t" style="top:173.54px;font-size:12px;line-height:16px;color:#777;letter-spacing:-0.180px;left:721.50px;">Data wystawienia</div>
<div class="t" style="top:173.54px;font-size:12px;line-height:16px;color:#777;letter-spacing:0.185px;left:855.25px;">Numer dokumentu</div>
<div class="t" style="top:173.54px;font-size:12px;line-height:16px;color:#777;letter-spacing:0.210px;left:995.20px;">Podmiot</div>
<div class="t" style="top:173.54px;font-size:12px;line-height:16px;color:#777;letter-spacing:0.163px;left:1061.25px;">Netto</div>
<div class="t" style="top:173.54px;font-size:12px;line-height:16px;color:#777;letter-spacing:-0.021px;left:1123.45px;">VAT</div>
<div class="t" style="top:173.54px;font-size:12px;line-height:16px;color:#777;letter-spacing:0.164px;left:1178.00px;">Brutto</div>
<svg style="left:693px;top:179px" width="9" height="5"><path d="M0 4.6L4.05 0.3L8.1 4.6Z" fill="#777"/></svg>
<div class="t" style="top:199.14px;font-size:12px;line-height:16px;color:#000;left:282.50px;">O</div>
<div class="t" style="top:199.14px;font-size:12px;line-height:16px;color:#000;left:340.00px;">ZZ</div>
<div class="t" style="top:199.14px;font-size:12px;line-height:16px;color:#000;letter-spacing:-0.114px;left:375.20px;">NK Nabycie krajowe</div>
<div class="t" style="top:199.14px;font-size:12px;line-height:16px;color:#000;left:497.30px;transform:scaleX(0.9445);transform-origin:left center;">luty 2014</div>
<div class="t" style="top:199.14px;font-size:12px;line-height:16px;color:#000;left:594.80px;transform:scaleX(0.9366);transform-origin:left center;">25-02-2014</div>
<div class="t" style="top:199.14px;font-size:12px;line-height:16px;color:#000;left:716.00px;transform:scaleX(0.9366);transform-origin:left center;">25-02-2014</div>
<div class="t" style="top:199.14px;font-size:12px;line-height:16px;color:#000;left:827.20px;transform:scaleX(0.9351);transform-origin:left center;">FZ 12/22/2014</div>
<div class="t" style="top:199.14px;font-size:12px;line-height:16px;color:#000;left:993.00px;transform:scaleX(0.8998);transform-origin:left center;">ABC s.c...</div>
<div class="t" style="top:199.14px;font-size:12px;line-height:16px;color:#000;right:153.40px;transform:scaleX(0.8990);transform-origin:right center;">2 000,00</div>
<div class="t" style="top:199.14px;font-size:12px;line-height:16px;color:#000;right:94.40px;transform:scaleX(0.8855);transform-origin:right center;">460,00</div>
<div class="t" style="top:199.14px;font-size:12px;line-height:16px;color:#000;right:31.60px;transform:scaleX(0.8990);transform-origin:right center;">2 460,00</div>
<div class="t" style="top:222.14px;font-size:12px;line-height:16px;color:#000;left:282.50px;">O</div>
<div class="t" style="top:222.14px;font-size:12px;line-height:16px;color:#000;left:340.00px;">ZZ</div>
<div class="t" style="top:222.14px;font-size:12px;line-height:16px;color:#000;letter-spacing:-0.114px;left:375.20px;">NK Nabycie krajowe</div>
<div class="t" style="top:222.14px;font-size:12px;line-height:16px;color:#000;left:497.30px;transform:scaleX(0.9153);transform-origin:left center;">marzec 2014</div>
<div class="t" style="top:222.14px;font-size:12px;line-height:16px;color:#000;left:594.80px;transform:scaleX(0.9366);transform-origin:left center;">25-02-2014</div>
<div class="t" style="top:222.14px;font-size:12px;line-height:16px;color:#000;left:716.00px;transform:scaleX(0.9366);transform-origin:left center;">25-02-2014</div>
<div class="t" style="top:222.14px;font-size:12px;line-height:16px;color:#000;left:827.20px;transform:scaleX(0.9351);transform-origin:left center;">FZ 12/22/2014</div>
<div class="t" style="top:222.14px;font-size:12px;line-height:16px;color:#000;left:993.00px;transform:scaleX(0.8998);transform-origin:left center;">ABC s.c...</div>
<div class="t" style="top:222.14px;font-size:12px;line-height:16px;color:#000;right:153.40px;transform:scaleX(0.8990);transform-origin:right center;">1 750,00</div>
<div class="t" style="top:222.14px;font-size:12px;line-height:16px;color:#000;right:94.40px;transform:scaleX(0.8855);transform-origin:right center;">402,50</div>
<div class="t" style="top:222.14px;font-size:12px;line-height:16px;color:#000;right:31.60px;transform:scaleX(0.8990);transform-origin:right center;">2 152,50</div>
<div class="t" style="top:245.14px;font-size:12px;line-height:16px;color:#000;left:282.50px;">O</div>
<div class="t" style="top:245.14px;font-size:12px;line-height:16px;color:#000;left:340.00px;">ZX</div>
<div class="t" style="top:245.14px;font-size:12px;line-height:16px;color:#000;letter-spacing:-0.114px;left:375.20px;">NK Nabycie krajowe</div>
<div class="t" style="top:245.14px;font-size:12px;line-height:16px;color:#000;left:497.30px;transform:scaleX(0.9445);transform-origin:left center;">luty 2014</div>
<div class="t" style="top:245.14px;font-size:12px;line-height:16px;color:#000;left:594.80px;transform:scaleX(0.9366);transform-origin:left center;">25-02-2014</div>
<div class="t" style="top:245.14px;font-size:12px;line-height:16px;color:#000;left:716.00px;transform:scaleX(0.9366);transform-origin:left center;">25-02-2014</div>
<div class="t" style="top:245.14px;font-size:12px;line-height:16px;color:#000;left:827.20px;transform:scaleX(0.9382);transform-origin:left center;">FZ 1/CENTRALA/2013</div>
<div class="t" style="top:245.14px;font-size:12px;line-height:16px;color:#000;letter-spacing:0.071px;left:993.00px;">Hurtow...</div>
<div class="t" style="top:245.14px;font-size:12px;line-height:16px;color:#000;right:153.40px;transform:scaleX(0.8990);transform-origin:right center;">26 680,00</div>
<div class="t" style="top:245.14px;font-size:12px;line-height:16px;color:#000;right:94.40px;transform:scaleX(0.8990);transform-origin:right center;">2 174,00</div>
<div class="t" style="top:245.14px;font-size:12px;line-height:16px;color:#000;right:31.60px;transform:scaleX(0.8990);transform-origin:right center;">28 854,00</div>
<div class="t" style="top:268.14px;font-size:12px;line-height:16px;color:#fff;left:282.50px;">O</div>
<div class="t" style="top:268.14px;font-size:12px;line-height:16px;color:#fff;left:340.00px;">ZX</div>
<div class="t" style="top:268.14px;font-size:12px;line-height:16px;color:#fff;letter-spacing:-0.114px;left:375.20px;">NK Nabycie krajowe</div>
<div class="t" style="top:268.14px;font-size:12px;line-height:16px;color:#fff;left:497.30px;transform:scaleX(0.9445);transform-origin:left center;">luty 2014</div>
<div class="t" style="top:268.14px;font-size:12px;line-height:16px;color:#fff;left:594.80px;transform:scaleX(0.9366);transform-origin:left center;">25-02-2014</div>
<div class="t" style="top:268.14px;font-size:12px;line-height:16px;color:#fff;left:716.00px;transform:scaleX(0.9366);transform-origin:left center;">25-02-2014</div>
<div class="t" style="top:268.14px;font-size:12px;line-height:16px;color:#fff;letter-spacing:-0.236px;left:827.20px;">Nr wew. FZ 1/GALAXIA/2013</div>
<div class="t" style="top:268.14px;font-size:12px;line-height:16px;color:#fff;letter-spacing:0.071px;left:993.00px;">Hurtow...</div>
<div class="t" style="top:268.14px;font-size:12px;line-height:16px;color:#fff;right:153.40px;transform:scaleX(0.8990);transform-origin:right center;">50 653,00</div>
<div class="t" style="top:268.14px;font-size:12px;line-height:16px;color:#fff;right:94.40px;transform:scaleX(0.8990);transform-origin:right center;">7 966,80</div>
<div class="t" style="top:268.14px;font-size:12px;line-height:16px;color:#fff;right:31.60px;transform:scaleX(0.8990);transform-origin:right center;">58 619,80</div>
<div class="t" style="top:357.84px;font-size:12px;line-height:16px;color:#000;right:154.20px;transform:scaleX(0.8990);transform-origin:right center;">81 083,00</div>
<div class="t" style="top:357.84px;font-size:12px;line-height:16px;color:#000;right:95.40px;transform:scaleX(0.9143);transform-origin:right center;">11 003,30</div>
<div class="t" style="top:357.84px;font-size:12px;line-height:16px;color:#000;right:32.60px;transform:scaleX(0.8990);transform-origin:right center;">92 086,30</div>
<svg style="left:1232px;top:173px" width="12" height="200"><path d="M2.2 8.4L6 4.2L9.8 8.4M2.2 192.4L6 196.6L9.8 192.4" fill="none" stroke="#7a7a7a" stroke-width="1.7"/></svg>
<div class="r" style="left:448px;top:385px;width:84px;height:24px;background:#fff;"></div>
<div class="r" style="left:270px;top:409px;width:974px;height:1px;background:#cfcfcf;"></div>
<div class="t" style="top:387.64px;font-size:12px;line-height:16px;color:#7e7e7e;letter-spacing:-0.289px;left:284.30px;">WIZYTÓWKA</div>
<div class="t" style="top:387.64px;font-size:12px;line-height:16px;color:#7e7e7e;left:376.00px;transform:scaleX(0.9057);transform-origin:left center;">ZDARZENIE</div>
<div class="t" style="top:387.64px;font-size:12px;line-height:16px;color:#7e7e7e;left:458.00px;transform:scaleX(0.8805);transform-origin:left center;">SZCZEGÓŁY</div>
<div class="t" style="top:387.64px;font-size:12px;line-height:16px;color:#7e7e7e;left:542.30px;transform:scaleX(0.8989);transform-origin:left center;">ROZRACHUNEK</div>
<div class="t" style="top:387.64px;font-size:12px;line-height:16px;color:#7e7e7e;left:646.00px;transform:scaleX(0.9429);transform-origin:left center;">POLA WŁASNE</div>
<svg style="left:1232px;top:412.3px" width="12" height="10"><path d="M2.2 8.4L6 4.2L9.8 8.4" fill="none" stroke="#7a7a7a" stroke-width="1.7"/></svg>
<div class="r" style="left:392px;top:416px;width:74px;height:21px;background:#f6f6f6;"></div>
<div class="r" style="left:467px;top:415px;width:79px;height:23px;background:#f6f6f6;"></div>
<div class="r" style="left:616px;top:416px;width:21px;height:21px;background:#f6f6f6;"></div>
<div class="r" style="left:1043px;top:416px;width:21px;height:21px;background:#f6f6f6;"></div>
<div class="r" style="left:392px;top:440px;width:823.5px;height:21px;background:#f6f6f6;"></div>
<div class="r" style="left:392px;top:464px;width:823.5px;height:21px;background:#f6f6f6;"></div>
<div class="r" style="left:392px;top:488px;width:153px;height:21px;background:#f6f6f6;"></div>
<div class="r" style="left:1062px;top:488px;width:153.5px;height:21px;background:#f6f6f6;"></div>
<div class="t" style="top:418.54px;font-size:12px;line-height:16px;color:#000;letter-spacing:-0.127px;left:286.30px;">Miesiąc odliczenia:</div>
<div class="t" style="top:442.84px;font-size:12px;line-height:16px;color:#000;left:286.30px;transform:scaleX(0.9070);transform-origin:left center;">Rejestr:</div>
<div class="t" style="top:467.04px;font-size:12px;line-height:16px;color:#000;letter-spacing:-0.280px;left:286.30px;">Transakcja:</div>
<div class="t" style="top:491.04px;font-size:12px;line-height:16px;color:#000;left:286.30px;transform:scaleX(0.9490);transform-origin:left center;">Rodzaj zakupu:</div>
<div class="t" style="top:418.54px;font-size:12px;line-height:16px;color:#000;letter-spacing:0.328px;left:394.20px;">luty</div>
<div class="t" style="top:418.54px;font-size:12px;line-height:16px;color:#000;left:472.70px;transform:scaleX(0.8838);transform-origin:left center;">2014</div>
<svg style="left:503px;top:420px" width="9" height="15"><path d="M0.8 5.8L4.4 1.2L8 5.8ZM0.8 9.7L4.4 14.2L8 9.7Z" fill="#111"/></svg>
<div class="r" style="left:528px;top:423.5px;width:7px;height:1px;background:#c4c4c4;"></div>
<div class="r" style="left:528px;top:426.5px;width:7px;height:1px;background:#c4c4c4;"></div>
<div class="r" style="left:528px;top:429.5px;width:7px;height:1px;background:#c4c4c4;"></div>
<div class="t" style="top:418.54px;font-size:12px;line-height:16px;color:#000;letter-spacing:-0.121px;left:642.80px;">Odliczaj VAT po zapłacie</div>
<svg style="left:1046px;top:419px" width="16" height="15"><path d="M1.7 7.8L5.9 11.8L15.1 2" fill="none" stroke="#787878" stroke-width="2.6"/></svg>
<div class="t" style="top:418.54px;font-size:12px;line-height:16px;color:#000;letter-spacing:-0.132px;left:1069.00px;">Wpływa na rozliczenie VAT</div>
<div class="t" style="top:442.84px;font-size:12px;line-height:16px;color:#000;left:394.00px;">RZ</div>
<div class="t" style="top:442.84px;font-size:12px;line-height:16px;color:#000;letter-spacing:-0.190px;left:418.00px;">Rejestr zakupów VAT</div>
<div class="t" style="top:467.04px;font-size:12px;line-height:16px;color:#000;left:394.00px;">NK</div>
<div class="t" style="top:467.04px;font-size:12px;line-height:16px;color:#000;letter-spacing:-0.070px;left:420.00px;">Nabycie krajowe</div>
<div class="t" style="top:491.04px;font-size:12px;line-height:16px;color:#000;left:394.80px;">K</div>
<div class="t" style="top:491.04px;font-size:12px;line-height:16px;color:#000;letter-spacing:-0.254px;left:406.30px;">Kosztowe</div>
<div class="t" style="top:491.04px;font-size:12px;line-height:16px;color:#000;letter-spacing:-0.244px;left:961.30px;">Rodzaj odliczenia:</div>
<div class="t" style="top:491.04px;font-size:12px;line-height:16px;color:#000;left:1065.00px;">C</div>
<div class="t" style="top:491.04px;font-size:12px;line-height:16px;color:#000;letter-spacing:-0.115px;left:1077.80px;">Całkowite</div>
<div class="t" style="top:518.24px;font-size:12px;line-height:16px;color:#000;left:386.20px;transform:scaleX(0.9299);transform-origin:left center;">Stawka</div>
<div class="t" style="top:518.24px;font-size:12px;line-height:16px;color:#000;letter-spacing:0.062px;left:621.50px;">Netto</div>
<div class="t" style="top:518.24px;font-size:12px;line-height:16px;color:#000;letter-spacing:-0.042px;left:859.50px;">Vat</div>
<div class="t" style="top:518.24px;font-size:12px;line-height:16px;color:#000;letter-spacing:0.164px;left:1083.50px;">Brutto</div>
<div class="r" style="left:288px;top:536px;width:927.5px;height:1px;background:#8f8f8f;"></div>
<div class="r" style="left:288px;top:698px;width:927.5px;height:1px;background:#8f8f8f;"></div>
<div class="r" style="left:288.5px;top:537.4px;width:230.5px;height:21.6px;background:#f6f6f6;"></div>
<div class="r" style="left:520.5px;top:537.4px;width:230.5px;height:21.6px;background:#f6f6f6;"></div>
<div class="r" style="left:752.5px;top:537.4px;width:230.5px;height:21.6px;background:#f6f6f6;"></div>
<div class="r" style="left:984.5px;top:537.4px;width:230.5px;height:21.6px;background:#f6f6f6;"></div>
<div class="t" style="top:540.84px;font-size:12px;line-height:16px;color:#000;letter-spacing:-0.161px;left:292.90px;">Stawka VAT podstawowa 23%</div>
<div class="t" style="top:540.84px;font-size:12px;line-height:16px;color:#000;right:508.70px;transform:scaleX(0.8990);transform-origin:right center;">28 280,00</div>
<div class="t" style="top:540.84px;font-size:12px;line-height:16px;color:#000;right:276.70px;transform:scaleX(0.8990);transform-origin:right center;">6 504,40</div>
<div class="t" style="top:540.84px;font-size:12px;line-height:16px;color:#000;right:44.50px;transform:scaleX(0.8990);transform-origin:right center;">34 784,40</div>
<div class="r" style="left:288.5px;top:560.4px;width:230.5px;height:21.6px;background:#f6f6f6;"></div>
<div class="r" style="left:520.5px;top:560.4px;width:230.5px;height:21.6px;background:#f6f6f6;"></div>
<div class="r" style="left:752.5px;top:560.4px;width:230.5px;height:21.6px;background:#f6f6f6;"></div>
<div class="r" style="left:984.5px;top:560.4px;width:230.5px;height:21.6px;background:#f6f6f6;"></div>
<div class="t" style="top:563.84px;font-size:12px;line-height:16px;color:#000;letter-spacing:-0.323px;left:292.90px;">Stawka VAT 8%</div>
<div class="t" style="top:563.84px;font-size:12px;line-height:16px;color:#000;right:508.70px;transform:scaleX(0.8990);transform-origin:right center;">18 280,00</div>
<div class="t" style="top:563.84px;font-size:12px;line-height:16px;color:#000;right:276.70px;transform:scaleX(0.8990);transform-origin:right center;">1 462,40</div>
<div class="t" style="top:563.84px;font-size:12px;line-height:16px;color:#000;right:44.50px;transform:scaleX(0.8990);transform-origin:right center;">19 742,40</div>
<div class="r" style="left:288.5px;top:583.4px;width:230.5px;height:21.6px;background:#f6f6f6;"></div>
<div class="r" style="left:520.5px;top:583.4px;width:230.5px;height:21.6px;background:#f6f6f6;"></div>
<div class="r" style="left:752.5px;top:583.4px;width:230.5px;height:21.6px;background:#f6f6f6;"></div>
<div class="r" style="left:984.5px;top:583.4px;width:230.5px;height:21.6px;background:#f6f6f6;"></div>
<div class="t" style="top:586.84px;font-size:12px;line-height:16px;color:#000;letter-spacing:-0.323px;left:292.90px;">Stawka VAT 5%</div>
<div class="t" style="top:586.84px;font-size:12px;line-height:16px;color:#000;right:508.70px;transform:scaleX(0.9118);transform-origin:right center;">0,00</div>
<div class="t" style="top:586.84px;font-size:12px;line-height:16px;color:#000;right:276.70px;transform:scaleX(0.9118);transform-origin:right center;">0,00</div>
<div class="t" style="top:586.84px;font-size:12px;line-height:16px;color:#000;right:44.50px;transform:scaleX(0.9118);transform-origin:right center;">0,00</div>
<div class="r" style="left:288.5px;top:606.4px;width:230.5px;height:21.6px;background:#f6f6f6;"></div>
<div class="r" style="left:520.5px;top:606.4px;width:230.5px;height:21.6px;background:#f6f6f6;"></div>
<div class="r" style="left:752.5px;top:606.4px;width:230.5px;height:21.6px;background:#f6f6f6;"></div>
<div class="r" style="left:984.5px;top:606.4px;width:230.5px;height:21.6px;background:#f6f6f6;"></div>
<div class="t" style="top:609.84px;font-size:12px;line-height:16px;color:#000;letter-spacing:-0.323px;left:292.90px;">Stawka VAT 0%</div>
<div class="t" style="top:609.84px;font-size:12px;line-height:16px;color:#000;right:508.70px;transform:scaleX(0.8990);transform-origin:right center;">2 493,00</div>
<div class="t" style="top:609.84px;font-size:12px;line-height:16px;color:#000;right:276.70px;transform:scaleX(0.9118);transform-origin:right center;">0,00</div>
<div class="t" style="top:609.84px;font-size:12px;line-height:16px;color:#000;right:44.50px;transform:scaleX(0.8990);transform-origin:right center;">2 493,00</div>
<div class="r" style="left:288.5px;top:629.4px;width:230.5px;height:21.6px;background:#f6f6f6;"></div>
<div class="r" style="left:520.5px;top:629.4px;width:230.5px;height:21.6px;background:#f6f6f6;"></div>
<div class="r" style="left:752.5px;top:629.4px;width:230.5px;height:21.6px;background:#f6f6f6;"></div>
<div class="r" style="left:984.5px;top:629.4px;width:230.5px;height:21.6px;background:#f6f6f6;"></div>
<div class="t" style="top:632.84px;font-size:12px;line-height:16px;color:#000;letter-spacing:-0.100px;left:292.90px;">Zwolnienie z VAT</div>
<div class="t" style="top:632.84px;font-size:12px;line-height:16px;color:#000;right:508.70px;transform:scaleX(0.8990);transform-origin:right center;">1 600,00</div>
<div class="t" style="top:632.84px;font-size:12px;line-height:16px;color:#000;right:276.70px;transform:scaleX(0.9118);transform-origin:right center;">0,00</div>
<div class="t" style="top:632.84px;font-size:12px;line-height:16px;color:#000;right:44.50px;transform:scaleX(0.8990);transform-origin:right center;">1 600,00</div>
<div class="r" style="left:288.5px;top:652.4px;width:230.5px;height:21.6px;background:#f6f6f6;"></div>
<div class="r" style="left:520.5px;top:652.4px;width:230.5px;height:21.6px;background:#f6f6f6;"></div>
<div class="r" style="left:752.5px;top:652.4px;width:230.5px;height:21.6px;background:#f6f6f6;"></div>
<div class="r" style="left:984.5px;top:652.4px;width:230.5px;height:21.6px;background:#f6f6f6;"></div>
<div class="t" style="top:655.84px;font-size:12px;line-height:16px;color:#000;letter-spacing:-0.323px;left:292.90px;">Stawka VAT 7%</div>
<div class="t" style="top:655.84px;font-size:12px;line-height:16px;color:#000;right:508.70px;transform:scaleX(0.9118);transform-origin:right center;">0,00</div>
<div class="t" style="top:655.84px;font-size:12px;line-height:16px;color:#000;right:276.70px;transform:scaleX(0.9118);transform-origin:right center;">0,00</div>
<div class="t" style="top:655.84px;font-size:12px;line-height:16px;color:#000;right:44.50px;transform:scaleX(0.9118);transform-origin:right center;">0,00</div>
<div class="r" style="left:288.5px;top:675.4px;width:230.5px;height:21.6px;background:#f6f6f6;"></div>
<div class="r" style="left:520.5px;top:675.4px;width:230.5px;height:21.6px;background:#f6f6f6;"></div>
<div class="r" style="left:752.5px;top:675.4px;width:230.5px;height:21.6px;background:#f6f6f6;"></div>
<div class="r" style="left:984.5px;top:675.4px;width:230.5px;height:21.6px;background:#f6f6f6;"></div>
<div class="t" style="top:678.84px;font-size:12px;line-height:16px;color:#000;letter-spacing:0.095px;left:292.90px;">Nieopodatkowane</div>
<div class="t" style="top:678.84px;font-size:12px;line-height:16px;color:#000;right:508.70px;transform:scaleX(0.9118);transform-origin:right center;">0,00</div>
<div class="t" style="top:678.84px;font-size:12px;line-height:16px;color:#000;right:276.70px;transform:scaleX(0.9118);transform-origin:right center;">0,00</div>
<div class="t" style="top:678.84px;font-size:12px;line-height:16px;color:#000;right:44.50px;transform:scaleX(0.9118);transform-origin:right center;">0,00</div>
<div class="t" style="top:701.84px;font-size:12px;line-height:16px;color:#000;right:506.50px;transform:scaleX(0.8990);transform-origin:right center;">50 653,00</div>
<div class="t" style="top:701.84px;font-size:12px;line-height:16px;color:#000;right:274.40px;transform:scaleX(0.8990);transform-origin:right center;">7 966,80</div>
<div class="t" style="top:701.84px;font-size:12px;line-height:16px;color:#000;right:42.40px;transform:scaleX(0.8990);transform-origin:right center;">58 619,80</div>
<div class="t" style="top:751.83px;font-size:8px;line-height:10px;color:#222;left:1234.00px;transform:scaleX(0.9720);transform-origin:left center;">Ψ</div>
<div class="t" style="top:748.99px;font-size:11px;line-height:14px;color:#222;letter-spacing:1.383px;left:1241.00px;">/-</div>
</main>
</div>
</body></html>
